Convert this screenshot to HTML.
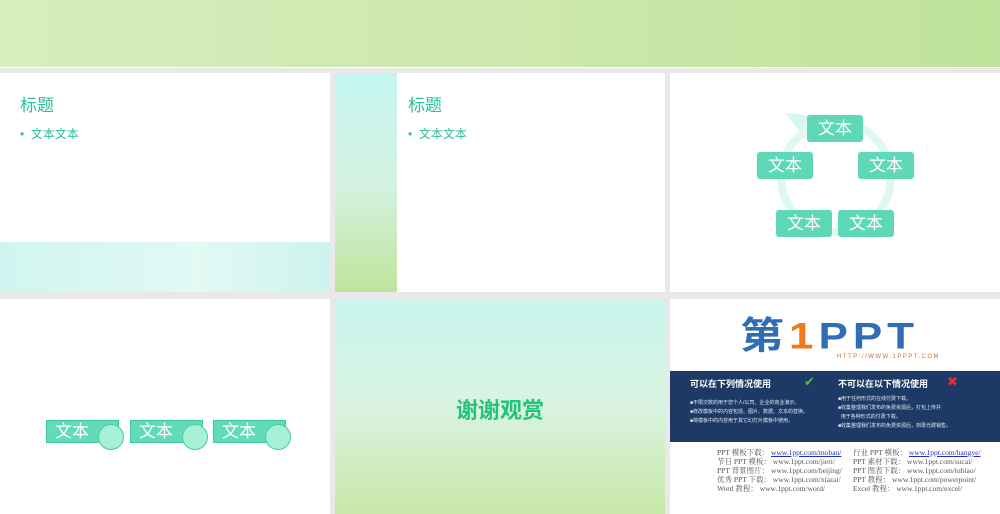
<!DOCTYPE html>
<html><head><meta charset="utf-8">
<style>
*{margin:0;padding:0;box-sizing:border-box}
body{width:1000px;height:514px;background:#e9e9e9;position:relative;overflow:hidden;font-family:"Liberation Sans","Noto Sans CJK SC",sans-serif}
.a{position:absolute}
.s{position:absolute;background:#fff;overflow:hidden}
.tt{color:#2bbf9a;font-size:17px}
.bl{color:#2bbf9a;font-size:12px}
.bx{position:absolute;background:#5fd8b8;color:#fff;font-size:17px;text-align:center;border-radius:3px;line-height:27px;width:56px;height:27px}
.t3{position:absolute;height:23px;width:73px;background:#62dbbb;border:1px solid #3fc79f;color:#fff;font-size:17px;line-height:21px;padding-left:8px}
.c3{position:absolute;width:26px;height:26px;border-radius:50%;background:#a6f0d6;border:1px solid #4ccba3}
.ln{font-family:"Liberation Serif","Noto Serif CJK SC",serif;font-size:7.5px;color:#555;line-height:9px;white-space:nowrap}
.ln u{color:#2230c0}
.sm{font-size:5px;color:#dfe6f0;line-height:9px;white-space:nowrap}
</style></head><body>
<div class="a" style="left:0;top:0;width:1000px;height:67px;background:linear-gradient(90deg,#d7edbd 0%,#cde8ae 50%,#bfe39a 100%)"></div>
<div class="a" style="left:0;top:67px;width:1000px;height:1px;background:#fff"></div>

<div class="s" style="left:0;top:73px;width:330px;height:219px">
<div class="a tt" style="left:20px;top:18px">标题</div>
<div class="a bl" style="left:20px;top:52px">•&nbsp; 文本文本</div>
<div class="a" style="left:0;top:169px;width:330px;height:50px;background:linear-gradient(90deg,#d0f5f0,#e2f9f4 60%,#cdf3ee)"></div>
</div>
<div class="s" style="left:335px;top:73px;width:330px;height:219px">
<div class="a" style="left:0;top:0;width:62px;height:219px;background:linear-gradient(180deg,#c4f4f0 0%,#d4f2e2 50%,#bfe49c 100%)"></div>
<div class="a tt" style="left:73px;top:18px">标题</div>
<div class="a bl" style="left:73px;top:52px">•&nbsp; 文本文本</div>
</div>
<div class="s" style="left:670px;top:73px;width:330px;height:219px">
<svg class="a" style="left:0;top:0" width="330" height="219"><circle cx="166" cy="104" r="55" fill="none" stroke="#e0f9f0" stroke-width="8"/><path d="M115 40 L145 43 L130 58 Z" fill="#d8f7ec"/></svg>
<div class="bx" style="left:137px;top:42px">文本</div>
<div class="bx" style="left:87px;top:79px">文本</div>
<div class="bx" style="left:188px;top:79px">文本</div>
<div class="bx" style="left:106px;top:137px">文本</div>
<div class="bx" style="left:168px;top:137px">文本</div>
</div>
<div class="s" style="left:0;top:299px;width:330px;height:215px">
<div class="t3" style="left:46px;top:121px">文本</div><div class="c3" style="left:98px;top:125px"></div>
<div class="t3" style="left:130px;top:121px">文本</div><div class="c3" style="left:182px;top:125px"></div>
<div class="t3" style="left:213px;top:121px">文本</div><div class="c3" style="left:265px;top:125px"></div>
</div>
<div class="s" style="left:335px;top:299px;width:330px;height:215px;background:linear-gradient(180deg,#c8f5ee 0%,#d9f3e0 50%,#c7e8a8 100%)">
<div class="a" style="left:0;width:330px;top:94px;text-align:center;font-size:22px;font-weight:bold;color:#22c27a">谢谢观赏</div>
</div>
<div class="s" style="left:670px;top:299px;width:330px;height:215px">
<div class="a" style="left:70px;top:18px;font-size:44px;font-weight:bold;color:#2f6db5;letter-spacing:5px;line-height:46px;transform:scaleY(0.85);transform-origin:top left">第<span style="color:#ea7a1a">1</span>PPT</div>
<div class="a" style="left:167px;top:55px;font-size:6px;color:#e07020;letter-spacing:1.5px">HTTP://WWW.1PPPT.COM</div>
<div class="a" style="left:0;top:72px;width:330px;height:71px;background:#1d3a66">
<div class="a" style="left:20px;top:6px;color:#fff;font-size:9px;font-weight:bold">可以在下列情况使用</div>
<div class="a" style="left:134px;top:3px;color:#4cc23a;font-size:13px">✔</div>
<div class="a" style="left:168px;top:6px;color:#fff;font-size:9px;font-weight:bold">不可以在以下情况使用</div>
<div class="a" style="left:277px;top:3px;color:#e03030;font-size:13px">✖</div>
<div class="a sm" style="left:20px;top:28px">■不限次数的用于您个人/公司、企业的商业演示。<br>■修改模板中的内容包括、图片、数据、文本的替换。<br>■将模板中的内容用于其它幻灯片模板中使用。</div>
<div class="a sm" style="left:168px;top:24px">■用于任何形式的在线付费下载。<br>■收集整理我们发布的免费资源后，打包上传并<br>&nbsp;&nbsp;用于各种形式的付费下载。<br>■收集整理我们发布的免费资源后，刻录光碟销售。</div>
</div>
<div class="a ln" style="left:47px;top:149px">PPT 模板下载： <u>www.1ppt.com/moban/</u><br>节日 PPT 模板： www.1ppt.com/jieri/<br>PPT 背景图片： www.1ppt.com/beijing/<br>优秀 PPT 下载： www.1ppt.com/xiazai/<br>Word 教程： www.1ppt.com/word/</div>
<div class="a ln" style="left:183px;top:149px">行业 PPT 模板： <u>www.1ppt.com/hangye/</u><br>PPT 素材下载： www.1ppt.com/sucai/<br>PPT 图表下载： www.1ppt.com/tubiao/<br>PPT 教程： www.1ppt.com/powerpoint/<br>Excel 教程： www.1ppt.com/excel/</div>
</div>
</body></html>
